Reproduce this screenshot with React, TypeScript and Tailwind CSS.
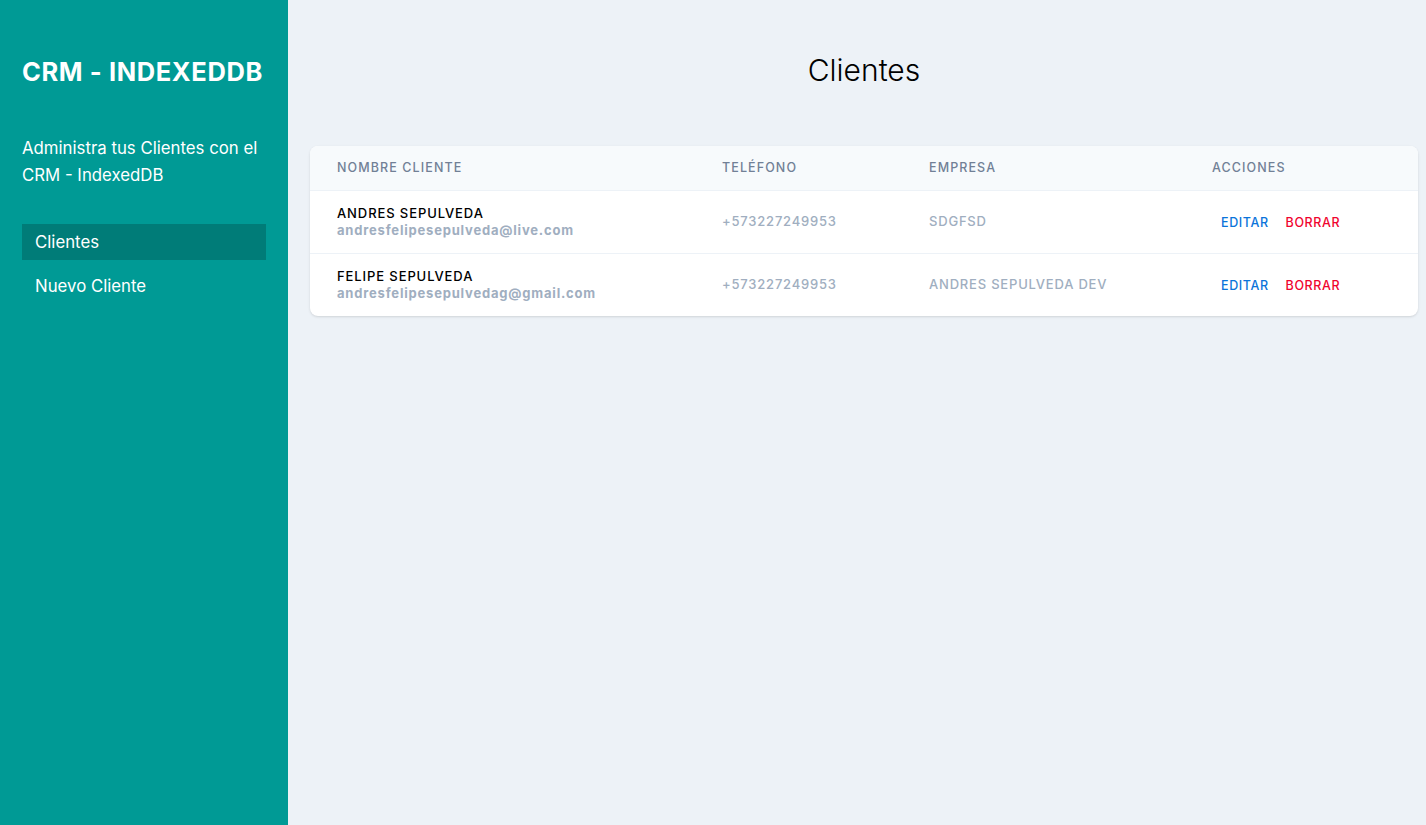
const clientes = [
  {
    nombre: 'Andres Sepulveda',
    email: 'andresfelipesepulveda@live.com',
    telefono: '+573227249953',
    empresa: 'sdgfsd',
  },
  {
    nombre: 'Felipe Sepulveda',
    email: 'andresfelipesepulvedag@gmail.com',
    telefono: '+573227249953',
    empresa: 'Andres Sepulveda Dev',
  },
];

const App = () => {
  return (
    <div className="min-h-screen flex bg-[#edf2f7] font-['Inter',sans-serif]">
      {/* Sidebar */}
      <aside className="w-72 shrink-0 bg-[#009a95] px-[22px] pt-[55px] text-white">
        <h1 className="text-[25.5px] leading-[34px] font-bold tracking-[0.6px]">CRM - INDEXEDDB</h1>
        <p className="mt-[46px] text-[16.8px] leading-[27px]">
          Administra tus Clientes con el CRM - IndexedDB
        </p>
        <nav className="mt-[35px] flex flex-col gap-2">
          <a className="block h-9 px-[13px] leading-9 text-[16.8px] bg-[#007c78]">Clientes</a>
          <a className="block h-9 px-[13px] leading-9 text-[16.8px]">Nuevo Cliente</a>
        </nav>
      </aside>

      {/* Main */}
      <main className="flex-1 pl-[22px] pr-2 pt-[48px]">
        <h2 className="text-center text-[30px] leading-[44px] font-light text-black">Clientes</h2>

        <div className="mt-[54px] bg-white rounded-lg shadow overflow-hidden">
          <table className="w-full table-fixed border-collapse">
            <thead>
              <tr className="h-11 bg-[#f7fafc] border-b border-[#edf2f7] text-left text-[12.5px] font-medium uppercase tracking-[1.1px] text-[#718096]">
                <th className="w-[385px] pl-[27px] pt-[2px] font-medium">Nombre Cliente</th>
                <th className="w-[207px] pl-[27px] pt-[2px] font-medium">Teléfono</th>
                <th className="w-[283px] pl-[27px] pt-[2px] font-medium">Empresa</th>
                <th className="pl-[27px] pt-[2px] font-medium">Acciones</th>
              </tr>
            </thead>
            <tbody>
              {clientes.map((c, i) => (
                <tr
                  key={c.email}
                  className={`h-[63px] ${i < clientes.length - 1 ? 'border-b border-[#edf2f7]' : ''}`}
                >
                  <td className="pl-[27px]">
                    <p className="text-[13px] leading-[17px] font-medium uppercase tracking-[0.9px] text-black">
                      {c.nombre}
                    </p>
                    <p className="text-[13px] leading-[17px] font-bold tracking-[0.8px] text-[#a0aec0]">{c.email}</p>
                  </td>
                  <td className="pl-[27px] text-[13px] font-medium tracking-[0.8px] text-[#a0aec0]">{c.telefono}</td>
                  <td className="pl-[27px] text-[13px] font-medium uppercase tracking-[0.8px] text-[#a0aec0]">
                    {c.empresa}
                  </td>
                  <td className="pl-9 pt-[3px]">
                    <div className="flex gap-[17px] text-[12.5px] font-medium uppercase tracking-[0.6px]">
                      <a className="text-[#0a74da]">Editar</a>
                      <a className="text-[#f0042f]">Borrar</a>
                    </div>
                  </td>
                </tr>
              ))}
            </tbody>
          </table>
        </div>
      </main>
    </div>
  );
};

export default App;
